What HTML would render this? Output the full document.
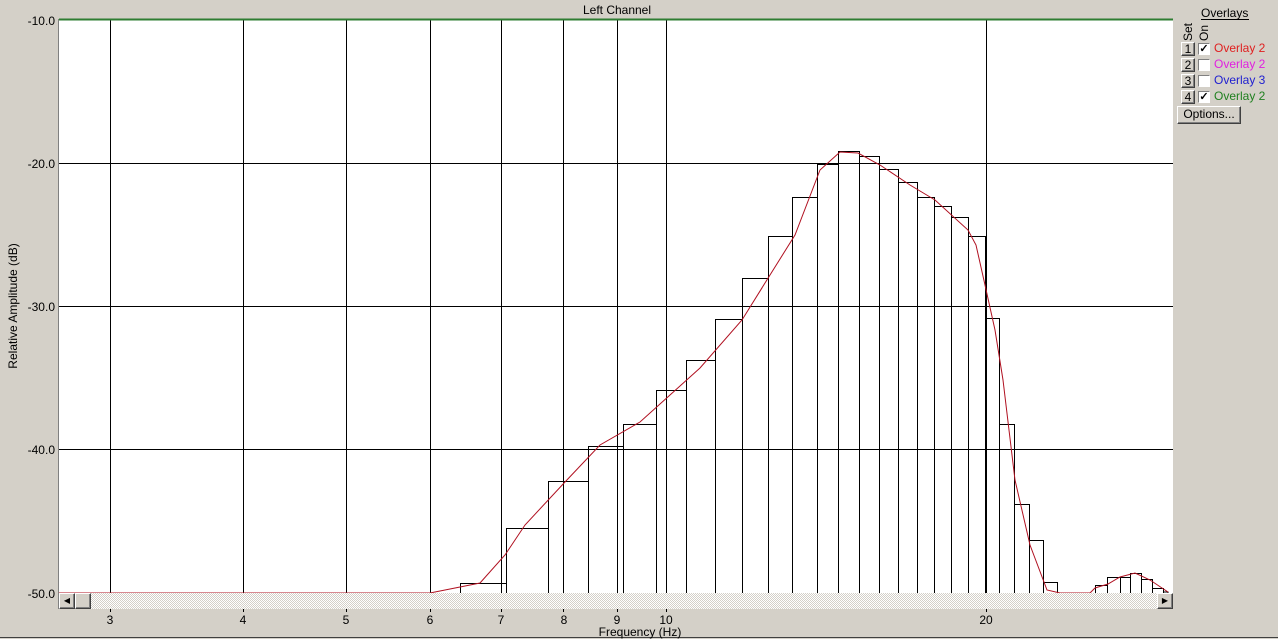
<!DOCTYPE html>
<html><head><meta charset="utf-8"><style>
body{margin:0;width:1278px;height:639px;overflow:hidden;background:#d4d0c8;font-family:"Liberation Sans",sans-serif;font-size:12px;}
svg{position:absolute;left:0;top:0}
.btn{position:absolute;background:#d4d0c8;border-top:1px solid #fff;border-left:1px solid #fff;border-right:1px solid #404040;border-bottom:1px solid #404040;box-shadow:inset -1px -1px 0 #808080;box-sizing:border-box;font-size:12px;text-align:center;line-height:13px;color:#000}
.cb{position:absolute;width:12px;height:12px;background:#fff;border-top:1px solid #808080;border-left:1px solid #808080;border-right:1px solid #fff;border-bottom:1px solid #fff;box-sizing:border-box;font-size:11px;line-height:10px;text-align:center;font-weight:bold}
.lbl{position:absolute;font-size:12px;line-height:13px}
</style></head><body>
<svg width="1278" height="639" xmlns="http://www.w3.org/2000/svg">
<defs><pattern id="chk" width="2" height="2" patternUnits="userSpaceOnUse"><rect width="2" height="2" fill="#fff"/><rect width="1" height="1" fill="#d4d0c8"/><rect x="1" y="1" width="1" height="1" fill="#d4d0c8"/></pattern></defs>
<line x1="0" y1="637.5" x2="1278" y2="637.5" stroke="#404040"/>
<rect x="59" y="19" width="1114" height="574" fill="#fff"/>
<line x1="58.5" y1="19" x2="58.5" y2="609" stroke="#808080"/>
<g stroke="#000" stroke-width="1">
<line x1="59" y1="163.5" x2="1173" y2="163.5"/><line x1="59" y1="306.5" x2="1173" y2="306.5"/><line x1="59" y1="449.5" x2="1173" y2="449.5"/>
<line x1="110.5" y1="19" x2="110.5" y2="593"/><line x1="243.5" y1="19" x2="243.5" y2="593"/><line x1="346.5" y1="19" x2="346.5" y2="593"/><line x1="430.5" y1="19" x2="430.5" y2="593"/><line x1="501.5" y1="19" x2="501.5" y2="593"/><line x1="563.5" y1="19" x2="563.5" y2="593"/><line x1="617.5" y1="19" x2="617.5" y2="593"/><line x1="666.5" y1="19" x2="666.5" y2="593"/><line x1="986.5" y1="19" x2="986.5" y2="593"/>
</g>
<g fill="none" stroke="#000" stroke-width="1">
<path d="M460.5 593V583.5H506.5V528.5H548.5V481.5H588.5V446.5H623.5V424.5H656.5V390.5H686.5V360.5H715.5V319.5H742.5V278.5H768.5V236.5H792.5V197.5H817.5V164.5H838.5V151.5H859.5V156.5H879.5V169.5H898.5V182.5H917.5V197.5H934.5V206.5H951.5V217.5H968.5V236.5H985.5V318.5H999.5V424.5H1014.5V504.5H1029.5V540.5H1043.5V582.5H1057.5V593"/>
<path d="M506.5 593V528.5M548.5 593V481.5M588.5 593V446.5M623.5 593V424.5M656.5 593V390.5M686.5 593V360.5M715.5 593V319.5M742.5 593V278.5M768.5 593V236.5M792.5 593V197.5M817.5 593V164.5M838.5 593V151.5M859.5 593V151.5M879.5 593V156.5M898.5 593V169.5M917.5 593V182.5M934.5 593V197.5M951.5 593V206.5M968.5 593V217.5M985.5 593V236.5M999.5 593V318.5M1014.5 593V424.5M1029.5 593V504.5M1043.5 593V540.5"/>
<path d="M1095.5 593V585.5H1107.5V577.5H1120.5V577.5H1130.5V573.5H1141.5V579.5H1152.5V588.5H1163.5V592H1168V593"/>
<path d="M1107.5 593V585.5M1120.5 593V577.5M1130.5 593V577.5M1141.5 593V573.5M1152.5 593V579.5M1163.5 593V588.5"/>
</g>
<line x1="59" y1="19.5" x2="1173" y2="19.5" stroke="#2e7d32" stroke-width="2"/>
<polyline fill="none" stroke="#b01020" stroke-width="1" points="59,593 430,593 480,583 505,555 525,525 565,482 600,445 640,422 670,395 700,368 742,320 770,275 795,235 820,170 840,152 858,153 880,165 910,185 935,200 968,230 976,245 985,285 995,330 1003,380 1015,480 1030,545 1047,590 1060,593 1090,593 1095,588 1108,584 1120,577 1135,573 1150,580 1168,592"/>
<rect x="59" y="593" width="1114" height="16" fill="url(#chk)"/>
<g stroke="#000"><line x1="110.5" y1="609" x2="110.5" y2="612"/><line x1="243.5" y1="609" x2="243.5" y2="612"/><line x1="346.5" y1="609" x2="346.5" y2="612"/><line x1="430.5" y1="609" x2="430.5" y2="612"/><line x1="501.5" y1="609" x2="501.5" y2="612"/><line x1="563.5" y1="609" x2="563.5" y2="612"/><line x1="617.5" y1="609" x2="617.5" y2="612"/><line x1="666.5" y1="609" x2="666.5" y2="612"/><line x1="986.5" y1="609" x2="986.5" y2="612"/></g>
<g font-family="Liberation Sans, sans-serif" font-size="12" fill="#000">
<text x="617" y="14" text-anchor="middle">Left Channel</text>
<g text-anchor="end"><text x="55" y="25">-10.0</text><text x="55" y="168">-20.0</text><text x="55" y="311">-30.0</text><text x="55" y="454">-40.0</text><text x="55" y="598">-50.0</text></g>
<g text-anchor="middle"><text x="110" y="624">3</text><text x="243" y="624">4</text><text x="346" y="624">5</text><text x="430" y="624">6</text><text x="501" y="624">7</text><text x="564" y="624">8</text><text x="617" y="624">9</text><text x="666" y="624">10</text><text x="986" y="624">20</text>
<text x="640" y="636">Frequency (Hz)</text></g>
<text transform="translate(17,306) rotate(-90)" text-anchor="middle">Relative Amplitude (dB)</text>
<text transform="translate(1192,41) rotate(-90)">Set</text>
<text transform="translate(1208,41) rotate(-90)">On</text>
<text x="1201" y="17">Overlays</text>
</g>
<line x1="1201" y1="19.5" x2="1249" y2="19.5" stroke="#000"/>
</svg>
<div class="btn" style="left:59px;top:593px;width:16px;height:16px;font-size:8px;line-height:14px">&#9664;</div>
<div class="btn" style="left:75px;top:593px;width:16px;height:16px"></div>
<div class="btn" style="left:1157px;top:593px;width:16px;height:16px;font-size:8px;line-height:14px">&#9654;</div>

<div class="btn" style="left:1181px;top:42px;width:14px;height:14px;line-height:12px">1</div>
<div class="cb" style="left:1198px;top:43px">&#10003;</div>
<div class="lbl" style="left:1214px;top:42px;color:#e02020">Overlay 2</div>
<div class="btn" style="left:1181px;top:58px;width:14px;height:14px;line-height:12px">2</div>
<div class="cb" style="left:1198px;top:59px"></div>
<div class="lbl" style="left:1214px;top:58px;color:#e020e0">Overlay 2</div>
<div class="btn" style="left:1181px;top:74px;width:14px;height:14px;line-height:12px">3</div>
<div class="cb" style="left:1198px;top:75px"></div>
<div class="lbl" style="left:1214px;top:74px;color:#2020d0">Overlay 3</div>
<div class="btn" style="left:1181px;top:90px;width:14px;height:14px;line-height:12px">4</div>
<div class="cb" style="left:1198px;top:91px">&#10003;</div>
<div class="lbl" style="left:1214px;top:90px;color:#208020">Overlay 2</div>
<div class="btn" style="left:1177px;top:106px;width:64px;height:18px;line-height:15px">Options...</div>
</body></html>
